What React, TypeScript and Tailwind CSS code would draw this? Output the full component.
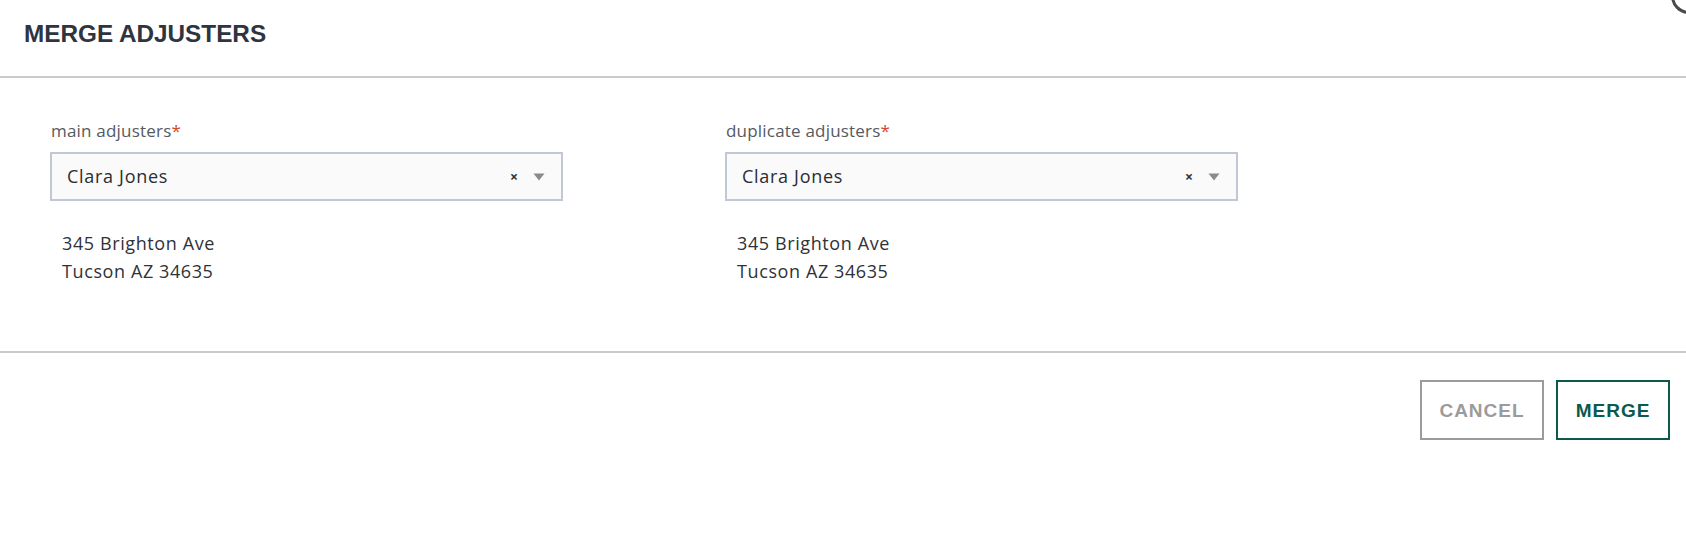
const Field = ({ label }: { label: string }) => {
  return (
    <div className="w-[513px]">
      <label className="block pl-[1px] text-[17px] leading-[20px] tracking-[0.2px] text-[#555a60]">
        {label}
        <span className="text-[#d9432b]">*</span>
      </label>
      <div className="mt-[11px] flex h-[49px] items-center border-2 border-[#c1c7d4] bg-[#fafafa] pl-[15px] pr-[16px]">
        <span className="flex-1 text-[18px] tracking-[0.7px] text-[#2a2d33]">Clara Jones</span>
        <span className="mr-[15px] text-[14px] font-bold text-[#333]">×</span>
        <svg width="12" height="8" viewBox="0 0 12 8" className="text-[#8a8a8a]">
          <path d="M0.5 0.5h11L6 7.5z" fill="currentColor" />
        </svg>
      </div>
      <div className="mt-[28px] pl-[12px] text-[18px] leading-[28px] tracking-[0.6px] text-[#2f3238]">
        <div>345 Brighton Ave</div>
        <div>Tucson AZ 34635</div>
      </div>
    </div>
  )
}

export default function App() {
  return (
    <div className="relative h-[540px] w-[1686px] overflow-hidden bg-white font-['Open_Sans',sans-serif]">
      <div className="absolute left-[1671px] top-[-22px] h-[36px] w-[36px] rounded-full border-[3px] border-[#4a4a4a]" />

      <header className="h-[78px] border-b-2 border-[#cacaca] px-[24px] pt-[19px]">
        <h1 className="font-['Liberation_Sans',Arial,sans-serif] text-[24.3px] font-bold leading-[30px] text-[#2e3440]">
          MERGE ADJUSTERS
        </h1>
      </header>

      <div className="flex h-[275px] gap-[162px] border-b-2 border-[#cacaca] pl-[50px] pt-[43px]">
        <Field label="main adjusters" />
        <Field label="duplicate adjusters" />
      </div>

      <footer className="flex justify-end gap-[12px] pr-[16px] pt-[27px] font-['Liberation_Sans',Arial,sans-serif]">
        <button className="h-[60px] w-[124px] border-2 border-[#9b9b9b] pt-[2px] text-[19px] font-bold tracking-[1px] text-[#9b9b9b]">
          CANCEL
        </button>
        <button className="h-[60px] w-[114px] border-2 border-[#0b5a4c] pt-[2px] text-[19px] font-bold tracking-[1px] text-[#0b5a4c]">
          MERGE
        </button>
      </footer>
    </div>
  )
}
